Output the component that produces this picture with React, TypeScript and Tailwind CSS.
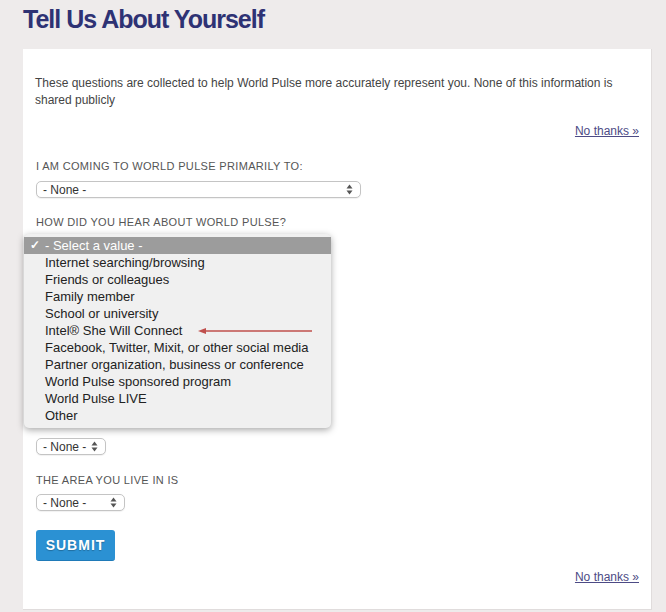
import React from 'react';

const font = { fontFamily: '"Liberation Sans", Arial, Helvetica, sans-serif' };

const options = [
  'Internet searching/browsing',
  'Friends or colleagues',
  'Family member',
  'School or university',
  'Intel® She Will Connect',
  'Facebook, Twitter, Mixit, or other social media',
  'Partner organization, business or conference',
  'World Pulse sponsored program',
  'World Pulse LIVE',
  'Other',
];

function Arrows() {
  return (
    <svg width="7" height="11" viewBox="0 0 7 11" className="shrink-0">
      <path d="M3.5 0.5 L6.5 4.5 L0.5 4.5 Z" fill="#555" />
      <path d="M3.5 10.5 L6.5 6.5 L0.5 6.5 Z" fill="#555" />
    </svg>
  );
}

function FakeSelect({ width }: { width: string }) {
  return (
    <div
      className={`${width} h-[17px] flex items-center justify-between pl-[6px] pr-[7px] bg-white border border-[#c4c4c4] rounded-[5px] text-[12px] text-[#333] shadow-[0_1px_1px_rgba(0,0,0,0.06)]`}
    >
      <span>- None -</span>
      <Arrows />
    </div>
  );
}

function Label({ children }: { children: React.ReactNode }) {
  return <div className="text-[11px] tracking-[0.03em] text-[#555] leading-[14px] uppercase">{children}</div>;
}

export default function App() {
  return (
    <div className="min-h-[612px] bg-[#eeebeb] pl-[23px] pr-[14px] pt-[4px] pb-[3px]" style={font}>
      <h1 className="text-[25px] leading-[30px] font-bold tracking-[-1px] text-[#2e3274]">Tell Us About Yourself</h1>

      <div className="mt-[15px] bg-white border-r border-b border-[#e0dcdc] pl-[12px] pr-[12px] pt-[26px] pb-[25px]">
        <p className="text-[12px] leading-[17px] text-[#444]">
          These questions are collected to help World Pulse more accurately represent you. None of this information is shared publicly
        </p>

        <div className="mt-[15px] flex justify-end">
          <a href="#" className="text-[12px] leading-[14px] text-[#4d4b85] underline">No thanks »</a>
        </div>

        <div className="mt-[21px] pl-[1px]">
          <Label>I am coming to World Pulse primarily to:</Label>
          <div className="mt-[8px]">
            <FakeSelect width="w-[325px]" />
          </div>
        </div>

        <div className="mt-[17px] pl-[1px]">
          <Label>How did you hear about World Pulse?</Label>
          <div className="relative h-[209px]">
            <div className="absolute left-[-12px] top-[5px] w-[307px] bg-[#f0f0f0] rounded-[5px] shadow-[0_2px_7px_rgba(0,0,0,0.35)] pt-[3px] pb-[4px] text-[13px] text-[#222] leading-[17px]">
              <div className="flex items-center h-[17px] bg-[#9c9c9c] text-white">
                <span className="w-[21px] pl-[6px] text-[12px] font-bold">✓</span>
                <span>- Select a value -</span>
              </div>
              {options.map((o) => (
                <div key={o} className="relative h-[17px] pl-[21px]">
                  {o}
                  {o.startsWith('Intel') && (
                    <svg className="absolute left-[174px] top-[5px]" width="116" height="8" viewBox="0 0 116 8">
                      <path d="M6 4 L114 4" stroke="#c0504d" strokeWidth="1.6" />
                      <path d="M0 4 L8 1 L8 7 Z" fill="#c0504d" />
                    </svg>
                  )}
                </div>
              ))}
            </div>
          </div>
          <FakeSelect width="w-[70px]" />
        </div>

        <div className="mt-[18px] pl-[1px]">
          <Label>The area you live in is</Label>
          <div className="mt-[7px]">
            <FakeSelect width="w-[89px]" />
          </div>
        </div>

        <button className="mt-[19px] ml-[1px] w-[79px] h-[31px] bg-[#2b91d3] rounded-[3px] border-b border-[#1f7ab8] text-white font-bold text-[14px] tracking-[1px] [text-shadow:0_1px_1px_rgba(0,0,0,0.25)]">
          SUBMIT
        </button>

        <div className="mt-[9px] flex justify-end">
          <a href="#" className="text-[12px] leading-[14px] text-[#4d4b85] underline">No thanks »</a>
        </div>
      </div>
    </div>
  );
}
